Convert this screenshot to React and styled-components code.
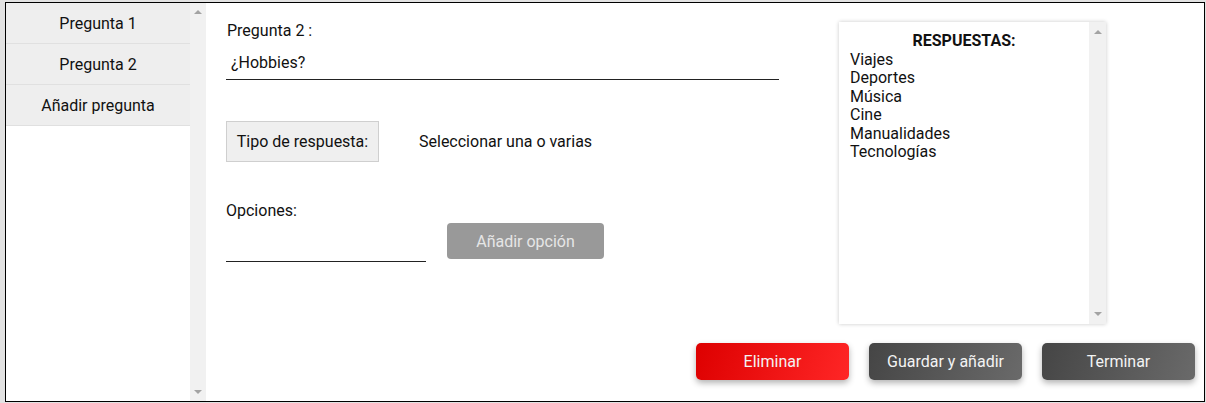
import React from "react";
import styled, { createGlobalStyle, css } from "styled-components";

const GlobalStyle = createGlobalStyle`
  html, body {
    margin: 0;
    padding: 0;
    background: #e2e2e2;
  }
  body {
    padding: 2px 0 0 5px;
    font-family: Roboto, "Liberation Sans", sans-serif;
    color: #111;
  }
`;

const Frame = styled.div`
  box-sizing: border-box;
  width: 1200px;
  height: 400px;
  border: 1px solid #000;
  background: #fff;
  display: flex;
  flex-direction: row;
`;

const Sidebar = styled.div`
  display: flex;
  flex-direction: row;
  width: 200px;
  flex-shrink: 0;
`;

const QuestionList = styled.div`
  width: 184px;
  display: flex;
  flex-direction: column;
`;

const QuestionItem = styled.div`
  height: 40px;
  display: flex;
  align-items: center;
  justify-content: center;
  background: #eeeeee;
  border-bottom: 1px solid #e0e0e0;
  font-size: 16px;
  color: #111;
`;

const arrow = css`
  content: "";
  position: absolute;
  left: 50%;
  margin-left: -4px;
  border-left: 4px solid transparent;
  border-right: 4px solid transparent;
`;

const Scrollbar = styled.div`
  position: relative;
  width: ${p => p.$w}px;
  flex-shrink: 0;
  background: #f1f1f1;

  &::before {
    ${arrow}
    top: ${p => p.$inset}px;
    border-bottom: 4px solid #a3a3a3;
  }
  &::after {
    ${arrow}
    bottom: ${p => p.$inset}px;
    border-top: 4px solid #a3a3a3;
  }
`;

const Main = styled.div`
  flex: 1;
  display: flex;
  flex-direction: column;
  padding: 19px 9px 0 20px;
`;

const TopRow = styled.div`
  display: flex;
  flex-direction: row;
`;

const Form = styled.div`
  width: 553px;
  display: flex;
  flex-direction: column;
  margin-right: 60px;
`;

const Label = styled.div`
  font-size: 16px;
  line-height: 18px;
  margin-left: ${p => p.$indent || 0}px;
`;

const LineInput = styled.div`
  box-sizing: border-box;
  width: ${p => p.$w}px;
  height: ${p => p.$h}px;
  border-bottom: 1px solid #222;
  display: flex;
  align-items: center;
  padding: 0 5px;
  margin-top: ${p => p.$mt || 0}px;
  font-size: 16px;
`;

const TypeRow = styled.div`
  display: flex;
  flex-direction: row;
  align-items: center;
  margin-top: 41px;
`;

const TypeTag = styled.div`
  box-sizing: border-box;
  width: 153px;
  height: 41px;
  display: flex;
  align-items: center;
  justify-content: center;
  background: #efefef;
  border: 1px solid #cfcfcf;
  font-size: 16px;
`;

const TypeValue = styled.div`
  margin-left: 40px;
  font-size: 16px;
`;

const OptionsBlock = styled.div`
  margin-top: 40px;
  display: flex;
  flex-direction: column;
`;

const OptionsRow = styled.div`
  display: flex;
  flex-direction: row;
  align-items: flex-start;
`;

const AddButton = styled.div`
  box-sizing: border-box;
  width: 157px;
  height: 36px;
  margin: 3px 0 0 21px;
  border-radius: 4px;
  background: #999;
  color: #e6e6e6;
  font-size: 16px;
  display: flex;
  align-items: center;
  justify-content: center;
`;

const Answers = styled.div`
  width: 267px;
  height: 302px;
  display: flex;
  flex-direction: row;
  background: #fff;
  box-shadow: 0 0 4px rgba(0, 0, 0, 0.22);
`;

const AnswerList = styled.div`
  flex: 1;
  padding: 10px 0 0 11px;
  font-size: 16px;
  line-height: 18.5px;
`;

const AnswerTitle = styled.div`
  font-weight: bold;
  text-align: center;
  padding-right: 11px;
  font-size: 16px;
`;

const Actions = styled.div`
  display: flex;
  flex-direction: row;
  justify-content: flex-end;
  gap: 20px;
  margin-top: 19px;
`;

const ActionButton = styled.div`
  width: 153px;
  height: 37px;
  border-radius: 5px;
  display: flex;
  align-items: center;
  justify-content: center;
  color: #f3f3f3;
  font-size: 16px;
  box-shadow: 0 3px 6px rgba(0, 0, 0, 0.3);
  background: ${p =>
    p.$danger
      ? "linear-gradient(110deg, #dd0000, #ff2626)"
      : "linear-gradient(110deg, #454545, #6a6a6a)"};
`;

const questions = ["Pregunta 1", "Pregunta 2", "Añadir pregunta"];
const answers = ["Viajes", "Deportes", "Música", "Cine", "Manualidades", "Tecnologías"];

const App = () => (
  <>
    <GlobalStyle />
    <Frame>
      <Sidebar>
        <QuestionList>
          {questions.map(q => (
            <QuestionItem key={q}>{q}</QuestionItem>
          ))}
        </QuestionList>
        <Scrollbar $w={16} $inset={7} />
      </Sidebar>
      <Main>
        <TopRow>
          <Form>
            <Label $indent={1}>Pregunta 2 :</Label>
            <LineInput $w={553} $h={35} $mt={5}>¿Hobbies?</LineInput>
            <TypeRow>
              <TypeTag>Tipo de respuesta:</TypeTag>
              <TypeValue>Seleccionar una o varias</TypeValue>
            </TypeRow>
            <OptionsBlock>
              <Label>Opciones:</Label>
              <OptionsRow>
                <LineInput $w={200} $h={42} />
                <AddButton>Añadir opción</AddButton>
              </OptionsRow>
            </OptionsBlock>
          </Form>
          <Answers>
            <AnswerList>
              <AnswerTitle>RESPUESTAS:</AnswerTitle>
              {answers.map(a => (
                <div key={a}>{a}</div>
              ))}
            </AnswerList>
            <Scrollbar $w={17} $inset={8} />
          </Answers>
        </TopRow>
        <Actions>
          <ActionButton $danger>Eliminar</ActionButton>
          <ActionButton>Guardar y añadir</ActionButton>
          <ActionButton>Terminar</ActionButton>
        </Actions>
      </Main>
    </Frame>
  </>
);

export default App;
